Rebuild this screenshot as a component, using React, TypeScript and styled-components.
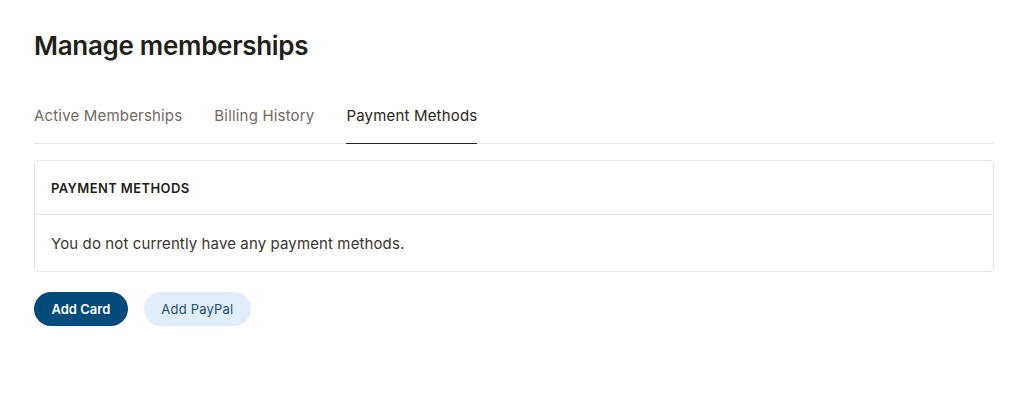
import React from 'react';
import styled, { createGlobalStyle } from 'styled-components';

const GlobalStyle = createGlobalStyle`
    body {
        margin: 0;
        background: #ffffff;
        font-family: Inter, "Noto Sans", sans-serif;
        color: #2b2620;
    }
`;

const tabs = ['Active Memberships', 'Billing History', 'Payment Methods'];

const App = () => {
    return (
        <>
            <GlobalStyle />
            <Page>
                <Title>Manage memberships</Title>
                <TabBar>
                    {tabs.map((t) => (
                        <Tab key={t} $active={t === 'Payment Methods'}>{t}</Tab>
                    ))}
                </TabBar>
                <Card>
                    <CardHeader>PAYMENT METHODS</CardHeader>
                    <CardBody>You do not currently have any payment methods.</CardBody>
                </Card>
                <Actions>
                    <PrimaryButton>Add Card</PrimaryButton>
                    <SecondaryButton>Add PayPal</SecondaryButton>
                </Actions>
            </Page>
        </>
    );
};

export default App;

const Page = styled.div`
    width: 960px;
    padding: 30px 0 0 34px;
`;

const Title = styled.h1`
    margin: 0;
    font-size: 26px;
    font-weight: 600;
    line-height: 32px;
    color: #221e18;
    letter-spacing: -0.3px;
`;

const TabBar = styled.div`
    display: flex;
    gap: 32px;
    margin-top: 44px;
    border-bottom: 1px solid #e6e4df;
`;

const Tab = styled.div<{ $active?: boolean }>`
    font-size: 15px;
    line-height: 20px;
    letter-spacing: 0.18px;
    padding-bottom: 17px;
    color: ${(p) => (p.$active ? '#2b2620' : '#6f6a63')};
    border-bottom: 1px solid ${(p) => (p.$active ? '#2b2620' : 'transparent')};
    margin-bottom: -1px;
    cursor: pointer;
`;

const Card = styled.div`
    margin-top: 16px;
    border: 1px solid #e6e4df;
    border-radius: 4px;
`;

const CardHeader = styled.div`
    height: 53px;
    display: flex;
    align-items: center;
    padding: 0 16px;
    font-size: 13px;
    font-weight: 600;
    letter-spacing: 0.4px;
    color: #221e18;
    border-bottom: 1px solid #e6e4df;
`;

const CardBody = styled.div`
    height: 56px;
    display: flex;
    align-items: center;
    padding: 0 16px;
    font-size: 15px;
    letter-spacing: 0.12px;
    color: #3a352f;
`;

const Actions = styled.div`
    display: flex;
    gap: 16px;
    margin-top: 20px;
`;

const PrimaryButton = styled.button`
    height: 34px;
    padding: 0 17.5px;
    border: none;
    border-radius: 17px;
    background: #004a7c;
    color: #ffffff;
    font-family: inherit;
    font-size: 13px;
    font-weight: 600;
    cursor: pointer;
`;

const SecondaryButton = styled(PrimaryButton)`
    background: #e1eefa;
    color: #1c4f7d;
    font-weight: 400;
    letter-spacing: 0.2px;
`;
